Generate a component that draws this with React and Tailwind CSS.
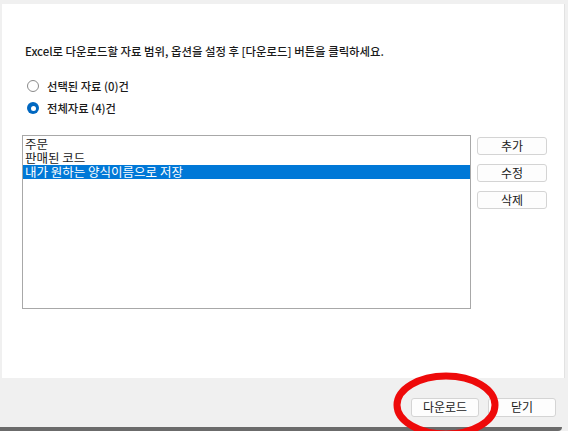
import React from "react";

const font = { fontFamily: '"Noto Sans CJK KR", "Noto Sans", sans-serif' };

function Radio({ checked, label }) {
  return (
    <div className="flex items-center h-[22px]">
      {checked ? (
        <span className="w-[12px] h-[12px] rounded-full bg-[#0067c0] flex items-center justify-center">
          <span className="w-[5px] h-[5px] rounded-full bg-white" />
        </span>
      ) : (
        <span className="w-[12px] h-[12px] rounded-full border border-[#8a8a8a] bg-white" />
      )}
      <span className="ml-[8px] text-[11.3px] leading-[14px] text-[#1a1a1a] font-medium">
        {label}
      </span>
    </div>
  );
}

function SideButton({ children }) {
  return (
    <button className="w-[70px] h-[18px] rounded-[3px] border border-[#d4d4d4] bg-[#fdfdfd] text-[12px] leading-[14px] text-[#1a1a1a]">
      {children}
    </button>
  );
}

export default function App() {
  const items = ["주문", "판매된 코드", "내가 원하는 양식이름으로 저장"];
  const selected = 2;

  return (
    <div
      className="relative w-[568px] h-[431px] bg-[#f0f0f0] overflow-hidden flex flex-col"
      style={font}
    >
      <div className="h-[4px] shrink-0" />

      <div className="h-[374px] shrink-0 ml-[2px] mr-[3px] bg-white border-r border-[#e2e2e2] pt-[40px] pl-[23px]">
        <p className="text-[11.4px] leading-[14px] text-[#1a1a1a] font-medium">
          Excel로 다운로드할 자료 범위, 옵션을 설정 후 [다운로드] 버튼을 클릭하세요.
        </p>

        <div className="mt-[17px] pl-[2px]">
          <Radio checked={false} label="선택된 자료 (0)건" />
          <Radio checked={true} label="전체자료 (4)건" />
        </div>

        <div className="mt-[16px] -ml-[3px] flex items-start">
          <div className="w-[449px] h-[174px] border border-[#a8a8a8] bg-white pt-[1px]">
            {items.map((item, i) => (
              <div
                key={item}
                className={
                  i === selected
                    ? "h-[14px] pl-[2px] text-[12.5px] leading-[14px] bg-[#0078d7] text-white whitespace-nowrap"
                    : "h-[14px] pl-[2px] text-[12.5px] leading-[14px] text-[#1a1a1a] whitespace-nowrap"
                }
              >
                {item}
              </div>
            ))}
          </div>
          <div className="ml-[6px] mt-[2px] flex flex-col gap-[9px]">
            <SideButton>추가</SideButton>
            <SideButton>수정</SideButton>
            <SideButton>삭제</SideButton>
          </div>
        </div>
      </div>

      <div className="h-[49px] shrink-0 flex items-center justify-end gap-[9px] pr-[12px] pt-[9px]">
        <button className="w-[68px] h-[19px] rounded-[3px] border border-[#d4d4d4] bg-[#fdfdfd] text-[12px] leading-[14px] text-[#1a1a1a]">
          다운로드
        </button>
        <button className="w-[68px] h-[19px] rounded-[3px] border border-[#d4d4d4] bg-[#fdfdfd] text-[12px] leading-[14px] text-[#1a1a1a]">
          닫기
        </button>
      </div>

      <div className="h-[4px] shrink-0 w-[562px] bg-[#6b6b6b] rounded-br-[6px]" />

      <svg
        className="absolute left-[390px] top-[370px] pointer-events-none"
        width="112"
        height="72"
        viewBox="0 0 112 72"
      >
        <ellipse
          cx="56"
          cy="35"
          rx="49"
          ry="29"
          fill="none"
          stroke="#ee0a0a"
          strokeWidth="7"
        />
      </svg>
    </div>
  );
}
